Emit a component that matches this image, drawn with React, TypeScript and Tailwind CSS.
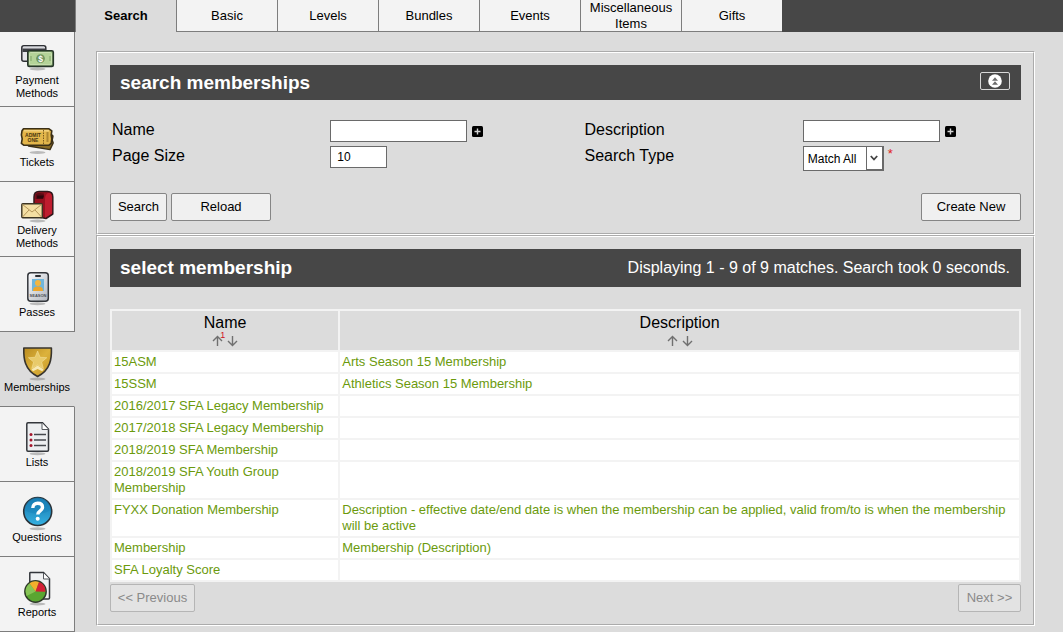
import type { ReactNode } from "react";

function Icon({ children, shadow = 33 }: { children: ReactNode; shadow?: number }) {
  return (
    <svg width="36" height="36" viewBox="0 0 36 36" aria-hidden="true" className="shrink-0">
      <ellipse cx="18.5" cy={shadow} rx="8" ry="1.5" fill="#8a8a8a" opacity="0.55" />
      {children}
    </svg>
  );
}

const PaymentIcon = () => (
  <Icon shadow={31}>
    <rect x="2.8" y="7.8" width="24" height="15.5" rx="2" fill="#e6e6ea" stroke="#2e3034" strokeWidth="1.5" />
    <path d="M3.500 10.500h23v3.500h-23z" fill="#3b3d42" />
    <path d="M4.500 9h20.500" stroke="#c9cbd0" strokeWidth="1" />
    <rect x="8.8" y="12.8" width="25.5" height="15.6" rx="1.5" fill="#8fb574" stroke="#27352a" strokeWidth="1.6" />
    <rect x="10.500" y="14.500" width="22" height="12.200" rx="1" fill="#b4d398" stroke="#d3e6bd" strokeWidth=".8" />
    <circle cx="21.500" cy="20.600" r="4.400" fill="#6f9560" />
    <text x="21.500" y="23.600" textAnchor="middle" fontSize="8.500" fontWeight="bold" fill="#fff" fontFamily="Liberation Sans, sans-serif">$</text>
    <path d="M12 18v5M31 18v5" stroke="#7fa568" strokeWidth="1" />
  </Icon>
);

const TicketsIcon = () => (
  <Icon shadow={32.5}>
    <path d="M10 22 31 13l3 3-.8 4 1 3-3.200 6.600L9.500 26z" fill="#8a6c26" stroke="#3a2f17" strokeWidth="1.400" strokeLinejoin="round" />
    <path d="M4.500 8.800h25.500l2.800 2-.6 4 .6 4-.6 4.500-2.500 2H5l-2.600-2 .8-4.500-.8-4 .6-4z" fill="#e3b64b" stroke="#3a2f17" strokeWidth="1.600" strokeLinejoin="round" />
    <path d="M5 10.800h25" stroke="#f6d98a" strokeWidth="1.200" />
    <path d="M24.500 10v15" stroke="#7a5a1c" strokeWidth="1" strokeDasharray="1.500 1" />
    <path d="M28.500 12.500v9.500" stroke="#7a5a1c" strokeWidth="2" strokeDasharray="1 1" />
    <text x="14" y="17" textAnchor="middle" fontSize="5" fontWeight="bold" fill="#4a3610" fontFamily="Liberation Sans, sans-serif">ADMIT</text>
    <text x="14" y="21.500" textAnchor="middle" fontSize="5" fontWeight="bold" fill="#4a3610" fontFamily="Liberation Sans, sans-serif">ONE</text>
  </Icon>
);

const DeliveryIcon = () => (
  <Icon shadow={33}>
    <path d="M15 28V9c0-3.500 2-5.500 5-5.500h8.500c3.500 0 5.300 2.200 5.300 5.500V26L27 30.500z" fill="#98101f" stroke="#30181b" strokeWidth="1.500" strokeLinejoin="round" />
    <path d="M26 29.800V11c0-4 1.800-6 4.200-6.300 2.200.8 2.900 2.800 2.900 4.800V25.600z" fill="#bf1c2e" />
    <path d="M16.500 6.500c1.500-1.800 5-1.800 8.500-1l-1 5.500h-7.500z" fill="#5c0a14" />
    <path d="M18 7.500h7l-.8 3H18z" fill="#2e070c" />
    <rect x="2.800" y="15.800" width="20.500" height="14" rx="1" fill="#f4dfa3" stroke="#3c3423" strokeWidth="1.400" />
    <path d="M3.500 16.500 13 24l9.500-7.500M3.500 29l6.500-7M22.500 29 16 22" fill="none" stroke="#b4955a" strokeWidth="1" />
  </Icon>
);

const PassesIcon = () => (
  <Icon shadow={33.8}>
    <defs>
      <linearGradient id="pass" x1="0" y1="0" x2="1" y2="1">
        <stop offset="0" stopColor="#fafbfd" />
        <stop offset="1" stopColor="#b3b7bf" />
      </linearGradient>
    </defs>
    <rect x="8.800" y="2.800" width="20.500" height="28.500" rx="3" fill="url(#pass)" stroke="#33363b" strokeWidth="1.500" />
    <rect x="16" y="5" width="6" height="2" rx="1" fill="#2b2d31" />
    <rect x="13" y="9" width="12" height="12" fill="#6fb6dc" />
    <circle cx="19" cy="13" r="3" fill="#f4b640" />
    <path d="M14 21c0-3.500 2-4.500 5-4.500s5 1 5 4.500z" fill="#eda62c" />
    <text x="19" y="27" textAnchor="middle" fontSize="4" fontWeight="bold" fill="#4b4e55" fontFamily="Liberation Sans, sans-serif">SEASON</text>
  </Icon>
);

const MembershipsIcon = () => (
  <Icon shadow={34}>
    <defs>
      <linearGradient id="shield" x1="0" y1="0" x2="1" y2="1">
        <stop offset="0" stopColor="#b98a1e" />
        <stop offset="0.500" stopColor="#dcb23c" />
        <stop offset="1" stopColor="#c39424" />
      </linearGradient>
    </defs>
    <path d="M4.800 3h27.600c.3 10-.5 22-13.800 28.500C5.300 25 4.500 13 4.800 3z" fill="url(#shield)" stroke="#37342f" strokeWidth="1.600" strokeLinejoin="round" />
    <path d="m18.600 6 2.500 6.300 6.700.4-5.200 4.300 1.800 6.500-5.800-3.600-5.800 3.600 1.800-6.500-5.200-4.300 6.700-.4z" fill="#e8ca6a" stroke="#f3df98" strokeWidth=".6" />
    <path d="m12.500 24.500 6.100-4 6.100 4-1.500 1.800-4.600-2.300-4.600 2.300z" fill="#f7e9b4" />
  </Icon>
);

const ListsIcon = () => (
  <Icon shadow={33.8}>
    <path d="M7.800 4c0-.8.400-1.200 1.200-1.200h14.500l6 6.500V30c0 .8-.4 1.200-1.200 1.200H9c-.8 0-1.200-.4-1.200-1.200z" fill="#eceef0" stroke="#33363b" strokeWidth="1.500" />
    <path d="M23 3v6.500h6.500" fill="#fff" stroke="#55585d" strokeWidth="1" />
    <path d="M15 14.500H27M15 20H27M15 25.500H27" stroke="#44474c" strokeWidth="1.300" />
    <circle cx="12" cy="14.500" r="1.500" fill="#a3142a" />
    <circle cx="12" cy="20" r="1.500" fill="#a3142a" />
    <circle cx="12" cy="25.500" r="1.500" fill="#a3142a" />
  </Icon>
);

const QuestionsIcon = () => (
  <Icon shadow={33.800}>
    <defs>
      <linearGradient id="help" x1="0" y1="0" x2="0" y2="1">
        <stop offset="0" stopColor="#1673a8" />
        <stop offset="1" stopColor="#35b1e2" />
      </linearGradient>
    </defs>
    <circle cx="18.700" cy="16.500" r="14" fill="url(#help)" stroke="#2a3238" strokeWidth="1.600" />
    <path d="M5.600 15a13.100 12.500 0 0 1 26.200 0C24 20 13 20 5.600 15z" fill="#1b86bd" opacity=".6" />
    <path d="M13.800 13c0-3.200 2-4.700 4.900-4.700s4.800 1.500 4.800 4c0 3.700-4.700 3.500-4.700 7.200" fill="none" stroke="#fff" strokeWidth="3.400" />
    <circle cx="18.700" cy="23.800" r="2" fill="#fff" />
  </Icon>
);

const ReportsIcon = () => (
  <Icon shadow={34}>
    <path d="M10.800 3c0-.2.300-.4.700-.4h13l6 6.200V28c0 .6-.4 1-1 1H11.800c-.6 0-1-.4-1-1z" fill="#f1f2f3" stroke="#33363b" strokeWidth="1.500" />
    <path d="M24.500 3v6h6" fill="#fff" stroke="#55585d" strokeWidth="1" />
    <circle cx="16.500" cy="21.500" r="10.700" fill="#5aa631" stroke="#2f3a2a" strokeWidth="1.400" />
    <path d="M6.600 21a10 10 0 0 1 4-7.600L16.500 21.500l-9 4.500z" fill="#86c455" />
    <path d="M16.500 21.500 10.500 13.300a10 10 0 0 1 9.500-1.200z" fill="#f2b02c" />
    <path d="M16.500 21.500 20 12.100a10 10 0 0 1 6.400 9.700z" fill="#d41f35" />
  </Icon>
);

const sections = [
  { label: "Payment Methods", icon: <PaymentIcon /> },
  { label: "Tickets", icon: <TicketsIcon /> },
  { label: "Delivery Methods", icon: <DeliveryIcon /> },
  { label: "Passes", icon: <PassesIcon /> },
  { label: "Memberships", icon: <MembershipsIcon />, active: true },
  { label: "Lists", icon: <ListsIcon /> },
  { label: "Questions", icon: <QuestionsIcon /> },
  { label: "Reports", icon: <ReportsIcon /> },
];

const tabs = ["Basic", "Levels", "Bundles", "Events", "Miscellaneous Items", "Gifts"];

const memberships = [
  ["15ASM", "Arts Season 15 Membership"],
  ["15SSM", "Athletics Season 15 Membership"],
  ["2016/2017 SFA Legacy Membership", ""],
  ["2017/2018 SFA Legacy Membership", ""],
  ["2018/2019 SFA Membership", ""],
  ["2018/2019 SFA Youth Group Membership", ""],
  [
    "FYXX Donation Membership",
    "Description - effective date/end date is when the membership can be applied, valid from/to is when the membership will be active",
  ],
  ["Membership", "Membership (Description)"],
  ["SFA Loyalty Score", ""],
];

const buttonClass =
  "h-7 rounded-xs border border-[#858585] bg-[#f0f0f0] text-[13px] leading-4 text-black disabled:border-[#b5b5b5] disabled:bg-[#e3e3e3] disabled:text-[#8a8a8a]";
const inputClass = "h-[22px] border border-[#6a6a6a] bg-white px-1.5 text-xs";

function AddButton({ label }: { label: string }) {
  return (
    <button type="button" aria-label={label}>
      <svg width="11" height="11" viewBox="0 0 11 11" className="block">
        <rect width="11" height="11" rx="1.500" fill="#000" />
        <path d="M5.500 2.500v6M2.500 5.500h6" stroke="#d4d4d4" strokeWidth="1.400" />
      </svg>
    </button>
  );
}

function SortButton({ label, down }: { label: string; down?: boolean }) {
  return (
    <button type="button" aria-label={label} className="block">
      <svg width="11" height="12" viewBox="0 0 11 12" className="block" fill="none" stroke="#707070" strokeWidth="1.400">
        {down ? <path d="M5.500 1v9.500M1 6l4.500 4.500L10 6" /> : <path d="M5.500 11V1.500M1 6l4.500-4.500L10 6" />}
      </svg>
    </button>
  );
}

function HeaderCell({ title, className, rank }: { title: string; className?: string; rank?: string }) {
  return (
    <th scope="col" className={`h-[39px] bg-[#dcdcdc] p-0 align-top text-base leading-6 font-normal ${className ?? ""}`}>
      {title}
      <div className="flex justify-center gap-1">
        <div className="relative">
          <SortButton label={`Sort by ${title} ascending`} />
          {rank && <span className="absolute -top-1 left-2 text-[9px] leading-2 text-[#d01020]">{rank}</span>}
        </div>
        <SortButton label={`Sort by ${title} descending`} down />
      </div>
    </th>
  );
}

export default function App() {
  return (
    <div className="min-h-screen bg-[#dcdcdc] font-['Liberation_Sans',Arial,sans-serif] text-black">
      <header className="flex h-8 bg-[#474747] pl-[75px]">
        <nav aria-label="Membership pages" className="flex text-center text-[13px] leading-4">
          <a href="#search" aria-current="page" className="flex w-[101px] items-center justify-center border-l border-[#7d7d7d] bg-[#dcdcdc] font-bold">
            Search
          </a>
          {tabs.map((tab) => (
            <a key={tab} href="#tab" className="flex w-[101px] items-center justify-center border-b border-l border-[#7d7d7d] bg-[#f3f3f3]">
              {tab}
            </a>
          ))}
        </nav>
      </header>

      <div className="flex items-start">
        <nav aria-label="Sections" className="w-[75px] shrink-0">
          {sections.map((s) => (
            <a
              key={s.label}
              href="#section"
              aria-current={s.active ? "true" : undefined}
              className={`flex h-[75px] flex-col items-center justify-center border-r border-b border-b-[#7d7d7d] text-center text-[11px] leading-[13px] ${
                s.active ? "border-r-[#dcdcdc] bg-[#dcdcdc]" : "border-r-[#7d7d7d] bg-[#f3f3f3]"
              }`}
            >
              {s.icon}
              {s.label}
            </a>
          ))}
        </nav>

        <main className="mt-[19px] mr-7 ml-[21px] min-w-0 flex-1">
          <section className="border-2 border-white p-3 [border-style:groove]">
            <div className="flex h-[35px] items-center justify-between bg-[#474747] pr-[11px] pl-2.5">
              <h2 className="text-[19px] leading-6 font-bold text-white">search memberships</h2>
              <button
                type="button"
                aria-label="Collapse search"
                className="mb-1 flex h-[18px] w-[30px] items-center justify-center rounded-xs border border-[#d8d8d8]"
              >
                <svg width="14" height="14" viewBox="0 0 14 14">
                  <circle cx="7" cy="7" r="6.800" fill="#fff" />
                  <path d="M4 6.800 7 3.300l3 3.500zM4 10.800 7 7.300l3 3.500z" fill="#6c6c6c" />
                </svg>
              </button>
            </div>

            <form onSubmit={(e) => e.preventDefault()}>
              <div className="mt-5 grid grid-cols-2 gap-x-9 gap-y-1 pl-0.5 text-base leading-5">
                <div className="flex items-start">
                  <label htmlFor="name" className="w-1/2 shrink-0">Name</label>
                  <div className="flex items-center gap-[5px]">
                    <input id="name" type="text" className={`${inputClass} w-[137px]`} />
                    <AddButton label="Add name" />
                  </div>
                </div>
                <div className="flex items-start">
                  <label htmlFor="description" className="w-1/2 shrink-0">Description</label>
                  <div className="flex items-center gap-[5px]">
                    <input id="description" type="text" className={`${inputClass} w-[137px]`} />
                    <AddButton label="Add description" />
                  </div>
                </div>
                <div className="flex items-start">
                  <label htmlFor="page-size" className="w-1/2 shrink-0">Page Size</label>
                  <input id="page-size" type="text" defaultValue="10" className={`${inputClass} w-[57px]`} />
                </div>
                <div className="flex items-start">
                  <label htmlFor="search-type" className="w-1/2 shrink-0">Search Type</label>
                  <div className="flex items-start gap-1">
                    <div className="relative">
                      <select
                        id="search-type"
                        className="block h-[25px] w-[81px] appearance-none border border-[#6a6a6a] bg-white pl-1 text-xs"
                      >
                        <option>Match All</option>
                        <option>Match Any</option>
                      </select>
                      <span className="pointer-events-none absolute inset-y-0 right-0 flex w-[18px] items-center justify-center border border-r-2 border-b-2 border-[#6a6a6a]">
                        <svg width="8" height="6" viewBox="0 0 8 6" fill="none" stroke="#444" strokeWidth="1.800">
                          <path d="m.8 1 3.200 3.500L7.200 1" />
                        </svg>
                      </span>
                    </div>
                    <span className="text-[13px] leading-4 text-[#e02020]">*</span>
                  </div>
                </div>
              </div>

              <div className="mt-[22px] flex gap-1">
                <button type="submit" className={`${buttonClass} w-[57px]`}>Search</button>
                <button type="reset" className={`${buttonClass} w-[100px]`}>Reload</button>
                <button type="button" className={`${buttonClass} ml-auto w-[100px]`}>Create New</button>
              </div>
            </form>
          </section>

          <section className="border-2 border-white p-3 [border-style:groove]">
            <div className="flex h-[38px] items-center justify-between bg-[#474747] pr-[11px] pl-2.5 text-white">
              <h2 className="text-[19px] leading-6 font-bold">select membership</h2>
              <p className="text-base">Displaying 1 - 9 of 9 matches. Search took 0 seconds.</p>
            </div>

            <table className="mt-[22px] w-full border-separate border-spacing-0.5 bg-[#f3f3f3] text-[13px] leading-4 text-[#6b9a0c]">
              <thead className="text-black">
                <tr>
                  <HeaderCell title="Name" className="w-1/4" rank="1" />
                  <HeaderCell title="Description" />
                </tr>
              </thead>
              <tbody>
                {memberships.map(([name, description]) => (
                  <tr key={name} className="bg-white align-top">
                    <td className="px-0.5 py-0.5">
                      <a href="#membership">{name}</a>
                    </td>
                    <td className="px-0.5 py-0.5">
                      {description && <a href="#membership">{description}</a>}
                    </td>
                  </tr>
                ))}
              </tbody>
            </table>

            <div className="mt-0.5 flex justify-between">
              <button type="button" disabled className={`${buttonClass} w-[85px]`}>&lt;&lt; Previous</button>
              <button type="button" disabled className={`${buttonClass} w-[63px]`}>Next &gt;&gt;</button>
            </div>
          </section>
        </main>
      </div>
    </div>
  );
}
